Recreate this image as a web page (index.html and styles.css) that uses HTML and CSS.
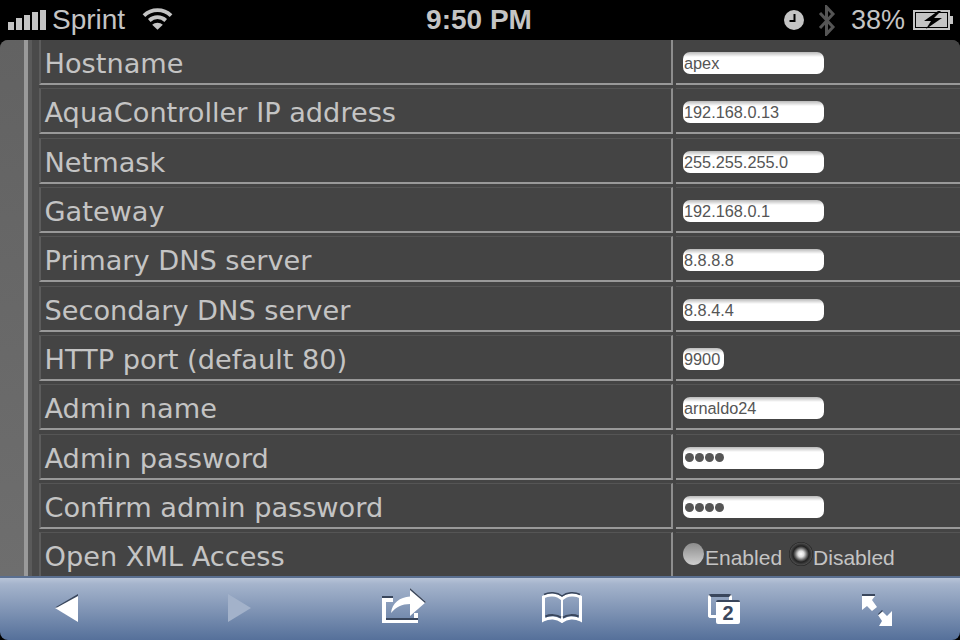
FILE: index.html
```html
<!DOCTYPE html>
<html lang="en">
<head>
  <meta charset="UTF-8">
  <title>Network settings</title>
  <link rel="stylesheet" href="styles.css">
</head>
<body>
  <div class="phone">
    <div class="status-bar">
      <div class="status-left">
        <svg class="signal" width="38" height="20" viewBox="0 0 38 20">
          <rect x="0" y="12" width="6" height="8" fill="#c4c4c4"/>
          <rect x="8" y="8" width="6" height="12" fill="#c4c4c4"/>
          <rect x="16" y="5" width="6" height="15" fill="#c4c4c4"/>
          <rect x="24" y="2" width="6" height="18" fill="#c4c4c4"/>
          <rect x="32" y="0" width="6" height="20" fill="#c4c4c4"/>
        </svg>
        <span class="carrier">Sprint</span>
        <svg class="wifi" width="31" height="24" viewBox="0 0 32 24">
          <path d="M2 8.500C10 1 22 1 30 8.500" fill="none" stroke="#c4c4c4" stroke-width="4"/>
          <path d="M7.500 13.500C12.500 9 19.500 9 24.500 13.500" fill="none" stroke="#c4c4c4" stroke-width="4"/>
          <path d="M10.500 18L16 23L21.500 18C18.500 15 13.500 15 10.500 18Z" fill="#c4c4c4"/>
        </svg>
      </div>
      <div class="clock">9:50 PM</div>
      <div class="status-right">
        <svg class="alarm" width="20" height="20" viewBox="0 0 20 20">
          <circle cx="10" cy="10" r="10" fill="#c4c4c4"/>
          <path d="M10.500 4V11H5.500" fill="none" stroke="#000" stroke-width="2"/>
        </svg>
        <svg class="bluetooth" width="18" height="31" viewBox="0 0 18 31">
          <path d="M2 8L15 22L8.500 29V2L15 9L2 23" fill="none" stroke="#555" stroke-width="3"/>
        </svg>
        <span class="battery-text">38%</span>
        <svg class="battery" width="40" height="20" viewBox="0 0 40 20">
          <rect x="1" y="1" width="35" height="18" fill="none" stroke="#c4c4c4" stroke-width="2"/>
          <rect x="3" y="3" width="31" height="14" fill="#c4c4c4"/>
          <rect x="37" y="6" width="3" height="8" fill="#c4c4c4"/>
          <path d="M25 1L11 11H18L13 19L29 8H21L28 1Z" fill="#000"/>
        </svg>
      </div>
    </div>

    <div class="page">
      <div class="gutter"></div>
      <div class="settings">
        <div class="row">
          <div class="label">Hostname</div>
          <div class="field"><div class="input">apex</div></div>
        </div>
        <div class="row">
          <div class="label">AquaController IP address</div>
          <div class="field"><div class="input">192.168.0.13</div></div>
        </div>
        <div class="row">
          <div class="label">Netmask</div>
          <div class="field"><div class="input">255.255.255.0</div></div>
        </div>
        <div class="row">
          <div class="label">Gateway</div>
          <div class="field"><div class="input">192.168.0.1</div></div>
        </div>
        <div class="row">
          <div class="label">Primary DNS server</div>
          <div class="field"><div class="input">8.8.8.8</div></div>
        </div>
        <div class="row">
          <div class="label">Secondary DNS server</div>
          <div class="field"><div class="input">8.8.4.4</div></div>
        </div>
        <div class="row">
          <div class="label">HTTP port (default 80)</div>
          <div class="field"><div class="input input-short">9900</div></div>
        </div>
        <div class="row">
          <div class="label">Admin name</div>
          <div class="field"><div class="input">arnaldo24</div></div>
        </div>
        <div class="row">
          <div class="label">Admin password</div>
          <div class="field"><div class="input input-dots"><i></i><i></i><i></i><i></i></div></div>
        </div>
        <div class="row">
          <div class="label">Confirm admin password</div>
          <div class="field"><div class="input input-dots"><i></i><i></i><i></i><i></i></div></div>
        </div>
        <div class="row row-last">
          <div class="label">Open XML Access</div>
          <div class="field radios">
            <span class="radio"></span><span class="radio-label">Enabled</span>
            <span class="radio radio-on"></span><span class="radio-label">Disabled</span>
          </div>
        </div>
      </div>
    </div>

    <div class="toolbar">
      <svg class="tool-back" width="23" height="28" viewBox="0 0 23 28">
        <path d="M0 14L23 1V28Z" fill="#fff"/>
        <path d="M0 13.500L23 0V2L2 13.500Z" fill="#39465c"/>
      </svg>
      <svg class="tool-forward" width="23" height="28" viewBox="0 0 23 28">
        <path d="M23 14L0 0V28Z" fill="#a3b2ca"/>
      </svg>
      <svg class="tool-share" width="44" height="35" viewBox="0 0 44 35">
        <path d="M0 10H11V14H4V30H32V25H36V35H0Z" fill="#fff"/>
        <path d="M0 8H11V10H0ZM4 30H36V32H4Z" fill="#39465c"/>
        <path d="M9 25C10 15 18 9 28 8.500V0L44 14L28 28V16C20 16 14 19 9 25Z" fill="#fff"/>
        <path d="M28 0L44 14L43 15L28 2Z" fill="#39465c"/>
      </svg>
      <svg class="tool-book" width="40" height="31" viewBox="0 0 40 31">
        <path d="M20 7C15 2 6 2 1.500 5V28C7 25 15 25 20 29.500C25 25 33 25 38.500 28V5C34 2 25 2 20 7Z" fill="none" stroke="#fff" stroke-width="3"/>
        <path d="M20 7V29" stroke="#fff" stroke-width="2"/>
        <path d="M2 2.500C7 0 15 0 20 4C25 0 33 0 38 2.500" fill="none" stroke="#39465c" stroke-width="1.500"/>
        <path d="M3.500 24.500C8 22.500 15 22.500 19 25.500M36.500 24.500C32 22.500 25 22.500 21 25.500" fill="none" stroke="#39465c" stroke-width="2"/>
      </svg>
      <div class="tabs-icon">
        <span class="tabs-back"></span>
        <span class="tabs-front">2</span>
      </div>
      <svg class="tool-expand" width="30" height="32" viewBox="0 0 30 32">
        <path d="M0 2H13L10 6L15 13L10 17L5 12L0 16Z" fill="#fff"/>
        <path d="M30 32H17L20 27L16 21L20 17L25 22L30 17Z" fill="#fff"/>
        <path d="M0 0H13V2H0ZM16 20L20 16L21 17L16.500 21Z" fill="#39465c"/>
      </svg>
    </div>
  </div>
</body>
</html>
```

FILE: styles.css
```css
* {
  box-sizing: border-box;
}
body {
  margin: 0;
  background: #000;
  font-family: "Liberation Sans", Arial, sans-serif;
}
.phone {
  width: 960px;
  height: 640px;
  overflow: hidden;
  display: flex;
  flex-direction: column;
}

/* status bar */
.status-bar {
  height: 40px;
  flex: none;
  background: #000;
  color: #c4c4c4;
  display: grid;
  grid-template-columns: 1fr auto 1fr;
  align-items: center;
  padding: 0 7px 0 8px;
}
.status-left {
  display: flex;
  align-items: center;
}
.status-right {
  display: flex;
  align-items: center;
  justify-content: flex-end;
}
.signal {
  margin-top: -1px;
}
.carrier {
  font-size: 28px;
  margin-left: 6px;
}
.wifi {
  margin-left: 17px;
  margin-top: -2px;
}
.clock {
  font-size: 28px;
  font-weight: bold;
  text-align: center;
  padding-right: 3px;
}
.alarm {
  margin-right: 14px;
}
.bluetooth {
  margin-right: 15px;
}
.battery-text {
  font-size: 27px;
  margin-right: 8px;
}

/* settings table */
.page {
  flex: 1;
  min-height: 0;
  overflow: hidden;
  display: flex;
  background: #444;
  border-radius: 8px 8px 0 0;
}
.gutter {
  width: 24px;
  flex: none;
  background: linear-gradient(#626262, #6e6e6e);
}
.settings {
  flex: 1;
  margin-top: -1px;
  padding-left: 11px;
  border-left: 4px solid #9a9a9a;
  background: linear-gradient(90deg, #5a5a5a 4px, #4a4a4a 4px, #4a4a4a 11px, #444 11px);
}
.row {
  display: flex;
  height: 46px;
  margin-bottom: 3.35px;
}
.label {
  width: 634px;
  flex: none;
  color: #c4c4c4;
  font-family: "DejaVu Sans", Verdana, sans-serif;
  font-size: 27.2px;
  line-height: 47px;
  padding-left: 3.5px;
  border-top: 1px solid #555;
  border-left: 2px solid #5c5c5c;
  border-right: 2px solid #8e8e8e;
  border-bottom: 2px solid #999;
}
.field {
  flex: 1;
  margin-left: 3px;
  padding: 12px 0 0 7px;
  border-top: 1px solid #555;
  border-bottom: 2px solid #999;
}
.input {
  width: 141px;
  height: 22px;
  background: linear-gradient(#b9b9b9, #fff 5px);
  border-radius: 7px;
  color: #555;
  font-size: 16.3px;
  line-height: 23px;
  padding-left: 1px;
}
.input-short {
  width: 41px;
}
.input-dots {
  display: flex;
  align-items: center;
  gap: 1px;
  padding-left: 2px;
}
.input-dots i {
  width: 9px;
  height: 9px;
  border-radius: 50%;
  background: #555;
}
.row-last {
  height: 50px;
}
.row-last .label,
.row-last .field {
  border-bottom: 0;
}
.radios {
  display: flex;
  align-items: center;
  padding-top: 0;
  color: #c4c4c4;
  font-size: 21px;
}
.radio {
  width: 21px;
  height: 22px;
  flex: none;
  border-radius: 50%;
  background: linear-gradient(#8c8c8c, #cfcfcf);
  margin-top: -8px;
  margin-right: 1px;
}
.radio-label {
  margin-right: 7px;
}
.radio-on {
  width: 24px;
  height: 24px;
  margin-right: 0;
  background: radial-gradient(circle closest-side, #fff 0, #ddd 3px, #666 6px, #222 8px, #4a4a4a 11px, #1c1c1c 12px);
}

/* safari toolbar */
.toolbar {
  height: 64px;
  flex: none;
  display: flex;
  align-items: flex-start;
  border-top: 2px solid #5a6f90;
  border-radius: 0 0 8px 8px;
  background: linear-gradient(#b8c4d8, #a5b4cc 6px, #55709a);
}
.tool-back {
  margin: 16px 0 0 55px;
}
.tool-forward {
  margin: 16px 0 0 150px;
}
.tool-share {
  margin: 10px 0 0 131px;
}
.tool-book {
  margin: 14px 0 0 116px;
}
.tabs-icon {
  width: 32px;
  height: 30px;
  margin: 16px 0 0 126px;
  position: relative;
}
.tool-expand {
  margin: 16px 0 0 122px;
}
.tabs-back {
  position: absolute;
  left: 0;
  top: 0;
  width: 24px;
  height: 24px;
  border: 3px solid #fff;
  border-top-color: #39465c;
  border-radius: 3px;
}
.tabs-front {
  position: absolute;
  right: 0;
  bottom: 0;
  width: 24px;
  height: 24px;
  background: #fff;
  border-top: 2px solid #39465c;
  border-radius: 2px;
  color: #39465c;
  font-size: 20px;
  font-weight: bold;
  line-height: 22px;
  text-align: center;
}
```
